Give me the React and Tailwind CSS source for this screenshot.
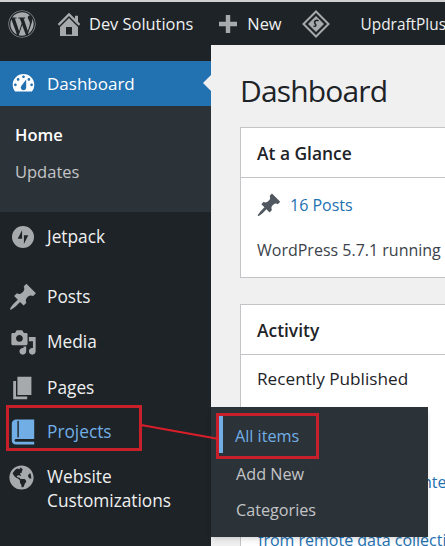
import React from "react";
import { FaWordpress, FaGlobeAmericas } from "react-icons/fa";

const font = "font-['Open_Sans','Noto_Sans',sans-serif]";

const Dash = ({ d, className }) => (
  <svg viewBox="0 0 20 20" className={`shrink-0 ${className}`} fill="currentColor">
    <path fillRule="evenodd" d={d} />
  </svg>
);

const HOME = "M16 8.500l1.530 1.530-1.060 1.060L10 4.620l-6.470 6.470-1.060-1.060L10 2.500l4 4v-2h2v4zm-6-2.460l6 5.990V18H4v-5.970zM12 17v-5H8v5h4z";
const GAUGE = "M3.760 16h12.480c1.100-1.370 1.760-3.110 1.760-5 0-4.420-3.580-8-8-8s-8 3.580-8 8c0 1.890.66 3.630 1.760 5zM10 4c.55 0 1 .45 1 1s-.45 1-1 1-1-.45-1-1 .45-1 1-1zM6 6c.55 0 1 .45 1 1s-.45 1-1 1-1-.45-1-1 .45-1 1-1zm8 0c.55 0 1 .45 1 1s-.45 1-1 1-1-.45-1-1 .45-1 1-1zm-5.370 5.550L12 7v6c0 1.100-.9 2-2 2s-2-.9-2-2c0-.57.24-1.080.63-1.450zM4 10c.55 0 1 .45 1 1s-.45 1-1 1-1-.45-1-1 .45-1 1-1zm12 0c.55 0 1 .45 1 1s-.45 1-1 1-1-.45-1-1 .45-1 1-1z";
const PIN = "M10.440 3.020l1.820-1.820 6.360 6.350-1.830 1.820c-1.050-.68-2.480-.57-3.410.36l-.75.75c-.92.93-1.040 2.350-.35 3.410l-1.830 1.820-2.410-2.410-2.800 2.790c-.42.42-3.380 2.710-3.800 2.290s1.860-3.390 2.280-3.810l2.790-2.790L4.100 9.360l1.830-1.820c1.050.69 2.480.57 3.400-.36l.75-.75c.93-.92 1.050-2.350.36-3.410z";
const MEDIA = "M13 11V4c0-.55-.45-1-1-1h-1.670L9 1H5L3.670 3H2c-.55 0-1 .45-1 1v7c0 .55.45 1 1 1h10c.55 0 1-.45 1-1zM7 4.500c1.380 0 2.500 1.120 2.500 2.500S8.380 9.500 7 9.500 4.500 8.380 4.500 7 5.620 4.500 7 4.500zM14 6h5v10.500c0 1.380-1.120 2.500-2.500 2.500S14 17.880 14 16.500s1.120-2.500 2.500-2.500c.17 0 .34.02.5.05V9h-3V6zm-4 8.050V13h2v3.500c0 1.380-1.120 2.500-2.500 2.500S7 17.880 7 16.500 8.120 14 9.500 14c.17 0 .34.02.5.05z";
const PAGES = "M6 15V2h10v13H6zm-1 1h8v2H3V5h2v11z";
const BOOK = "M5 17h13v2H5c-1.660 0-3-1.340-3-3V4c0-1.660 1.340-3 3-3h13v14H5c-.55 0-1 .45-1 1s.45 1 1 1zm2-3.500v-11c0-.28-.22-.5-.5-.5s-.5.22-.5.5v11c0 .28.22.5.5.5s.5-.22.5-.5z";

const JetpackIcon = () => (
  <svg viewBox="0 0 24 24" className="w-[22px] h-[22px] shrink-0" fill="currentColor">
    <path fillRule="evenodd" d="M12 0a12 12 0 100 24 12 12 0 000-24zM11 4.500V14H6.200zM13 10h4.800L13 19.500z" />
  </svg>
);

const PlusIcon = () => (
  <svg viewBox="0 0 18 18" className="w-[18px] h-[18px] shrink-0" fill="currentColor">
    <path d="M6.800 0h4.400v6.800H18v4.400h-6.800V18H6.800v-6.800H0V6.800h6.800z" />
  </svg>
);

const DiamondIcon = () => (
  <svg viewBox="0 0 28 28" className="w-[28px] h-[28px] shrink-0" fill="none" stroke="currentColor">
    <path d="M14 1.500L26.500 14 14 26.500 1.500 14z" strokeWidth="2" />
    <path d="M14 6l8 8-8 8-8-8z" fill="currentColor" stroke="none" />
    <path d="M16.500 11c-2-1.500-5 0-3.500 2.500s1.500 2.500-1.500 3" stroke="#1d2327" strokeWidth="1.500" />
  </svg>
);

const MenuItem = ({ icon, label, active, className }) => (
  <div className={`flex items-center h-[24px] ${className}`}>
    <span className={`w-[47px] flex justify-center pr-[1px] shrink-0 ${active ? "text-[#72aee6]" : "text-[#a7aaad]"}`}>
      {icon}
    </span>
    <span className={`text-[17.3px] leading-[24px] ${active ? "text-[#72aee6]" : "text-[#f0f0f1]"}`}>{label}</span>
  </div>
);

export default function App() {
  return (
    <div className={`relative w-[445px] h-[546px] overflow-hidden bg-[#f0f0f1] ${font}`}>
      <div className="h-[2px] bg-[#cfcfcf]" />
      {/* admin bar */}
      <header className="h-[43px] bg-[#1d2327] flex items-center pl-[8px] text-[16.4px] text-[#f0f0f1] whitespace-nowrap">
        <FaWordpress className="text-[#a7aaad] w-[28px] h-[28px] shrink-0" />
        <Dash d={HOME} className="text-[#a7aaad] w-[30px] h-[30px] ml-[18px]" />
        <span className="ml-[5px] pt-[2px]">Dev Solutions</span>
        <span className="text-[#a7aaad] ml-[26px]"><PlusIcon /></span>
        <span className="ml-[10px] pt-[2px]">New</span>
        <span className="text-[#a7aaad] ml-[20px]"><DiamondIcon /></span>
        <span className="ml-[31px] pt-[2px] text-[15.4px]">UpdraftPlus</span>
      </header>

      <div className="flex h-[501px]">
        {/* sidebar */}
        <aside className="w-[211px] shrink-0 bg-[#1d2327] pt-[16px]">
          <div className="relative h-[45px] bg-[#2271b1] flex items-center">
            <span className="w-[47px] flex justify-center pr-[1px] text-white shrink-0"><Dash d={GAUGE} className="w-[27px] h-[27px]" /></span>
            <span className="text-[17px] text-white">Dashboard</span>
            <span className="absolute right-0 top-[14px] border-y-[8px] border-y-transparent border-r-[8px] border-r-[#f0f0f1]" />
          </div>
          <div className="h-[106px] bg-[#2c3338] pt-[17px] pl-[15px] text-[16.5px]">
            <div className="font-semibold text-white leading-[24px]">Home</div>
            <div className="text-[#c3c4c7] leading-[24px] mt-[13px]">Updates</div>
          </div>
          <MenuItem icon={<JetpackIcon />} label="Jetpack" className="mt-[13px]" />
          <MenuItem icon={<Dash d={PIN} className="w-[30px] h-[30px]" />} label="Posts" className="mt-[36px]" />
          <MenuItem icon={<Dash d={MEDIA} className="w-[27px] h-[27px]" />} label="Media" className="mt-[21px]" />
          <MenuItem icon={<Dash d={PAGES} className="w-[28px] h-[28px]" />} label="Pages" className="mt-[22px]" />
          <MenuItem icon={<Dash d={BOOK} className="w-[28px] h-[28px]" />} label="Projects" active className="mt-[20px]" />
          <div className="flex mt-[21px]">
            <span className="w-[47px] pl-[9px] text-[#a7aaad] shrink-0"><FaGlobeAmericas className="w-[25px] h-[25px]" /></span>
            <span className="text-[17.3px] leading-[24px] text-[#f0f0f1]">Website<br />Customizations</span>
          </div>
        </aside>

        {/* content */}
        <main className="flex-1 min-w-0 pl-[29px] text-[#1d2327] overflow-hidden whitespace-nowrap">
          <h1 className="text-[30px] tracking-[-0.85px] leading-[40px] mt-[26px] text-[#1d2327]">Dashboard</h1>
          <section className="mt-[16px] w-[300px] h-[151px] bg-white border border-[#c3c4c7] border-r-0">
            <h2 className="h-[50px] pt-[1px] flex items-center pl-[16px] text-[17.4px] font-semibold border-b border-[#c3c4c7]">At a Glance</h2>
            <div className="flex items-center pl-[15px] mt-[15px] h-[24px]">
              <Dash d={PIN} className="w-[26px] h-[26px] text-[#50575e]" />
              <span className="ml-[8px] text-[16px] text-[#2271b1]">16 Posts</span>
            </div>
            <p className="pl-[16px] mt-[21px] text-[16px] leading-[24px] text-[#3c434a]">WordPress 5.7.1 running</p>
          </section>
          <section className="mt-[26px] w-[300px] h-[300px] bg-white border border-[#c3c4c7] border-r-0">
            <h2 className="h-[50px] pt-[2px] flex items-center pl-[16px] text-[17.4px] font-semibold border-b border-[#c3c4c7]">Activity</h2>
            <p className="pl-[16px] mt-[12px] text-[17.2px] leading-[24px] text-[#1d2327]">Recently Published</p>
            <p className="pl-[181px] mt-[79px] text-[16px] leading-[24px] text-[#2271b1]">nte</p>
            <p className="pl-[17px] mt-[34px] text-[16px] leading-[24px] text-[#2271b1]">from remote data collection</p>
          </section>
        </main>
      </div>

      {/* flyout submenu */}
      <div className="absolute left-[211px] top-[407px] w-[217px] h-[130px] bg-[#2c3338] shadow-md pt-[9px] text-[16.2px] text-[#c3c4c7]">
        <div className="h-[37px] flex items-center ml-[7px] pl-[12px] pt-[3px] border-l-[5px] border-[#72aee6] text-[#72aee6]">All items</div>
        <div className="mt-[9px] pl-[25px] leading-[24px]">Add New</div>
        <div className="mt-[12px] pl-[25px] leading-[24px]">Categories</div>
      </div>

      {/* red annotations */}
      <div className="absolute left-[6px] top-[405px] w-[136px] h-[46px] border-[3px] border-[#c8202a]" />
      <div className="absolute left-[216px] top-[413px] w-[103px] h-[46px] border-[3px] border-[#c8202a]" />
      <svg className="absolute left-[140px] top-[424px]" width="80" height="16">
        <line x1="1" y1="1" x2="79" y2="15" stroke="#d81f2a" strokeWidth="2" />
      </svg>
    </div>
  );
}
